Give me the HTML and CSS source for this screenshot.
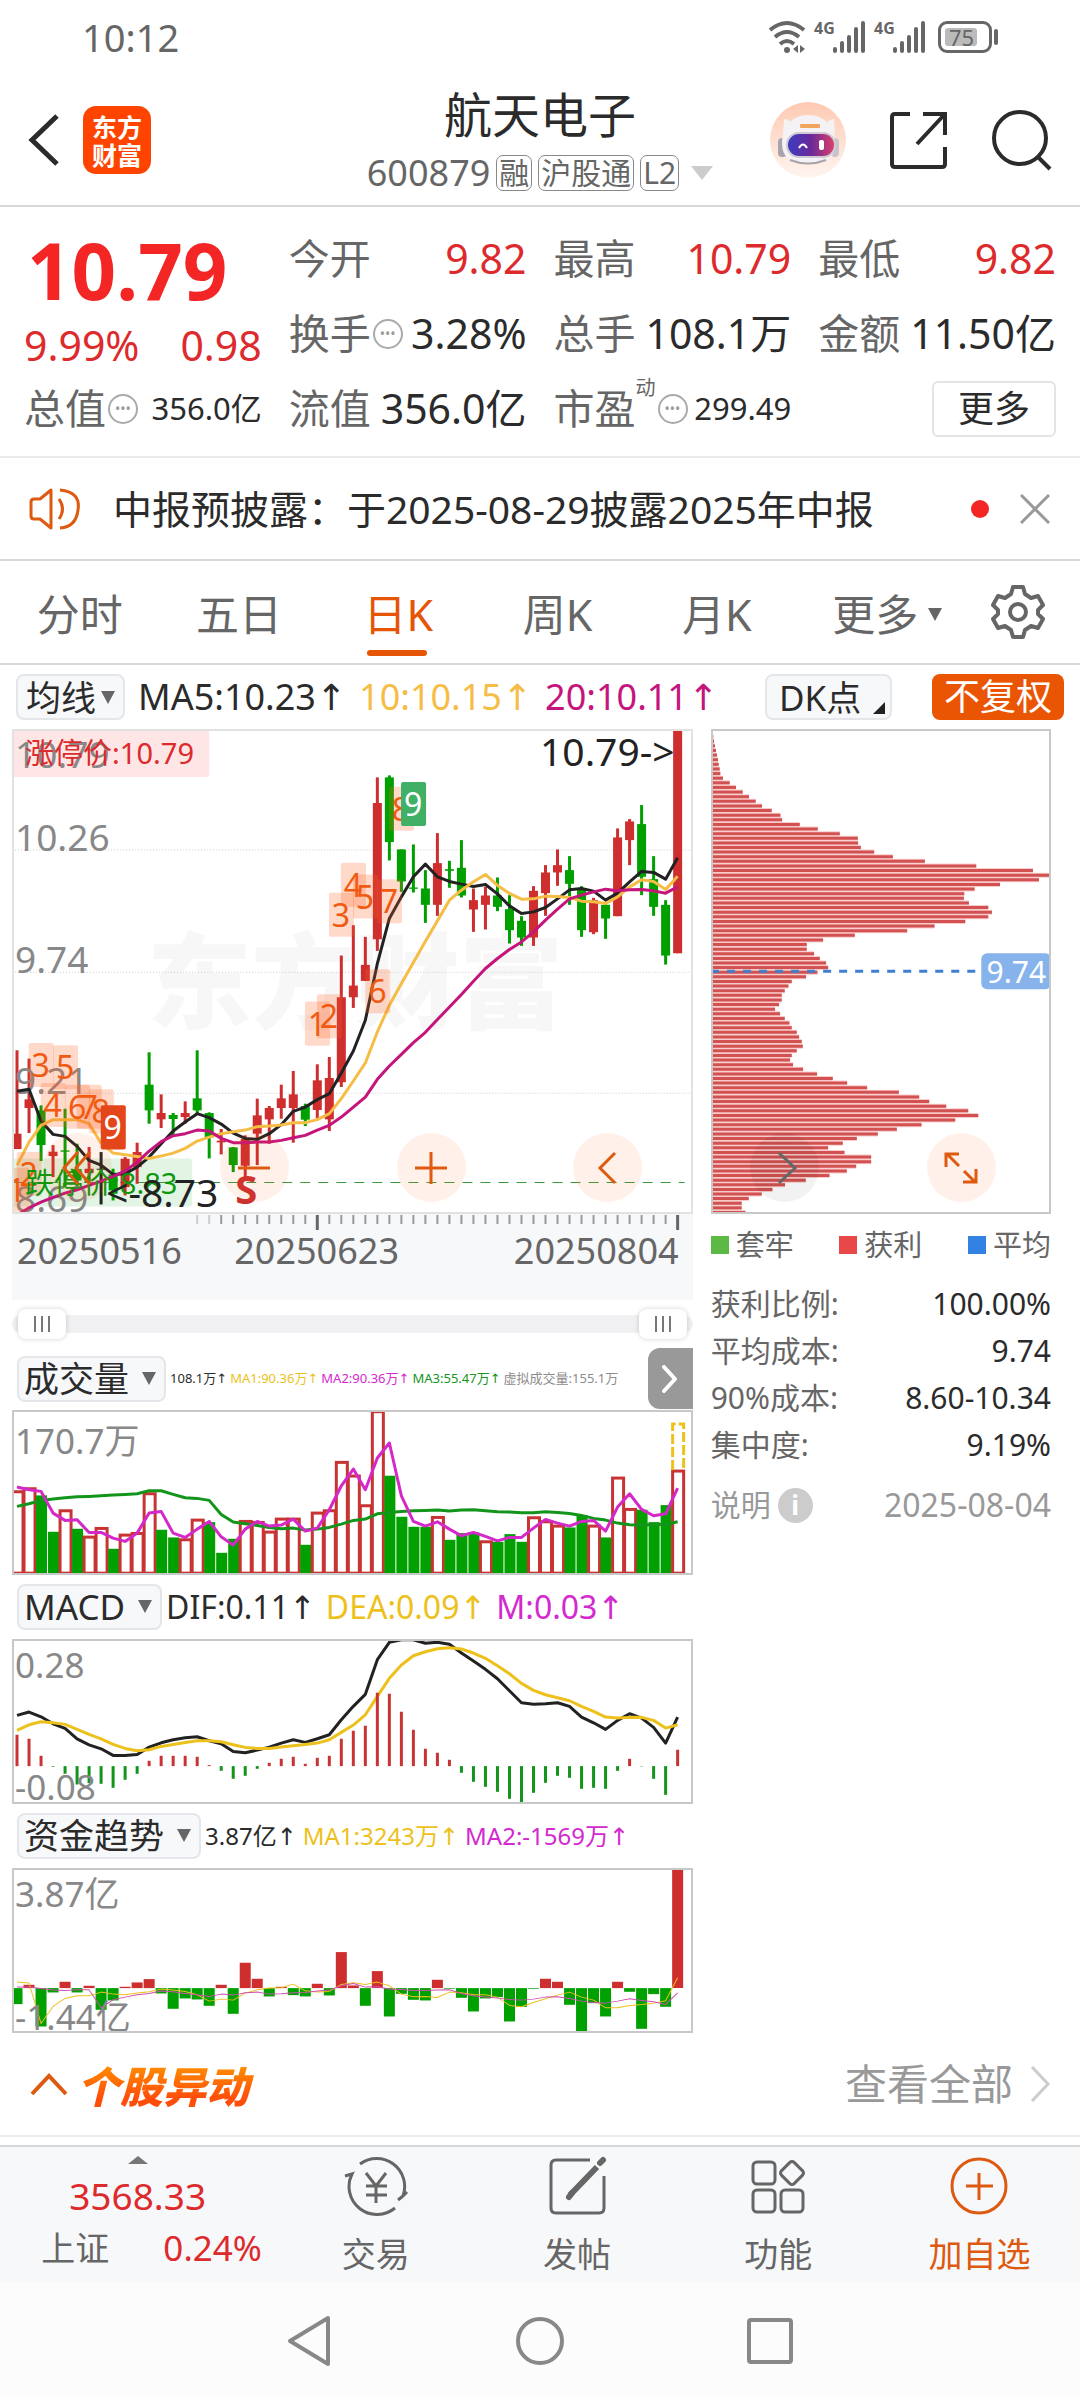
FILE: index.html
```html
<!DOCTYPE html>
<html lang="zh-CN">
<head>
<meta charset="utf-8">
<meta name="viewport" content="width=device-width, initial-scale=1">
<title>航天电子 600879</title>
<link rel="stylesheet" href="styles.css">
</head>
<body>
<div class="status">
  <span class="clock">10:12</span>
  <div class="status-icons">
    <svg class="wifi" viewBox="0 0 38 34" width="38" height="34"><g fill="none" stroke="#666" stroke-width="4"><path d="M2 10Q19-4 36 10"/><path d="M7 17Q19 7 31 17"/><path d="M12 24Q19 18 26 24"/></g><circle cx="19" cy="30" r="3" fill="#666"/><path d="M30 25v8l-5-4zM32 25l5 4-5 4z" fill="#666"/></svg>
    <span class="net">4G</span>
    <svg viewBox="0 0 34 34" width="34" height="34" stroke="#666" stroke-width="4" stroke-linecap="round"><path d="M3 29v2M10 23v8M17 17v14M24 9v22M31 3v28"/></svg>
    <span class="net">4G</span>
    <svg viewBox="0 0 34 34" width="34" height="34" stroke="#666" stroke-width="4" stroke-linecap="round"><path d="M3 29v2M10 23v8M17 17v14M24 9v22M31 3v28"/></svg>
    <span class="battery"><b>75</b></span>
  </div>
</div>

<header class="head">
  <div class="head-left">
    <button class="plain" aria-label="返回"><svg width="32" height="54" viewBox="0 0 32 54"><path d="M29 3L4 27l25 24" fill="none" stroke="#2b2b2b" stroke-width="5"/></svg></button>
    <a class="logo" href="#">东方<br>财富</a>
  </div>
  <div class="head-mid">
    <h1>航天电子</h1>
    <div class="sub"><span class="code">600879</span><span class="tag">融</span><span class="tag">沪股通</span><span class="tag">L2</span><svg class="drop" width="22" height="14" viewBox="0 0 22 14"><path d="M0 0h22L11 14z" fill="#ccc"/></svg></div>
  </div>
  <div class="head-right">
    <button class="plain" aria-label="智能助手"><svg width="76" height="76" viewBox="0 0 76 76"><defs><linearGradient id="halo" x1="0" y1="0" x2="0" y2="1"><stop offset="0" stop-color="#fdc9b2"/><stop offset="1" stop-color="#fff5f0"/></linearGradient><linearGradient id="visor" x1="0" y1="0" x2="1" y2="0"><stop offset="0" stop-color="#3b3cc0"/><stop offset=".5" stop-color="#6a2a9a"/><stop offset="1" stop-color="#e0406a"/></linearGradient></defs><circle cx="38" cy="38" r="38" fill="url(#halo)"/><path d="M14 17q6 0 8 6l-9 9zM64 17q-6 0-8 6l9 9z" fill="#f6f2f2"/><rect x="8" y="36" width="9" height="19" rx="4" fill="#a9a4ac"/><rect x="61" y="36" width="8" height="19" rx="4" fill="#c9c4cb"/><path d="M38 13C55 13 65 25 65 41S55 62 39 62 12 57 12 41 22 13 38 13z" fill="#f4f2f4"/><path d="M20 58q18 7 36 0" stroke="#a9a4ac" stroke-width="2" fill="none"/><rect x="30" y="22" width="20" height="4" rx="1" fill="#f2a55e"/><rect x="17" y="31" width="48" height="24" rx="12" fill="url(#visor)" stroke="#d0cad4" stroke-width="2"/><path d="M29 46q4-7 8 0" stroke="#fff" stroke-width="2" fill="none"/><rect x="49" y="38" width="5" height="10" rx="2" fill="#fff"/></svg></button>
    <button class="plain" aria-label="分享"><svg width="60" height="60" viewBox="0 0 60 60" fill="none" stroke="#2b2b2b" stroke-width="4"><path d="M21 4H6q-3 0-3 3v47q0 3 3 3h47q3 0 3-3V37"/><path d="M34 4h22v21M55 5L28 34"/></svg></button>
    <button class="plain" aria-label="搜索"><svg width="60" height="62" viewBox="0 0 60 62" fill="none" stroke="#2b2b2b" stroke-width="4"><circle cx="28" cy="29" r="26"/><path d="M46 48l12 12"/></svg></button>
  </div>
</header>

<section class="quote">
  <div class="price-cell"><strong>10.79</strong><div class="pair red"><span>9.99%</span><span>0.98</span></div></div>
  <div class="cell"><span>今开</span><b class="red">9.82</b></div>
  <div class="cell"><span>最高</span><b class="red">10.79</b></div>
  <div class="cell"><span>最低</span><b class="red">9.82</b></div>
  <div class="cell"><span>换手<i class="more-dot">•••</i></span><b>3.28%</b></div>
  <div class="cell"><span>总手</span><b>108.1万</b></div>
  <div class="cell"><span>金额</span><b>11.50亿</b></div>
  <div class="cell small"><span>总值<i class="more-dot">•••</i></span><b>356.0亿</b></div>
  <div class="cell"><span>流值</span><b>356.0亿</b></div>
  <div class="cell small"><span>市盈<sup>动</sup><i class="more-dot">•••</i></span><b>299.49</b></div>
  <div class="cell last"><button class="more-btn">更多</button></div>
</section>

<section class="notice">
  <svg width="52" height="44" viewBox="0 0 52 44" fill="none" stroke="#dd5a10" stroke-width="3" stroke-linejoin="round"><path d="M22 3v38L11 32H5q-3 0-3-3V15q0-3 3-3h6z"/><path d="M30 12q7 10 0 20M31 3q21 2 18 20-2 17-18 18"/></svg>
  <a href="#">中报预披露：于2025-08-29披露2025年中报</a>
  <i class="dot"></i>
  <button class="plain" aria-label="关闭"><svg width="30" height="30" viewBox="0 0 30 30" stroke="#999" stroke-width="3"><path d="M1 1l28 28M29 1L1 29"/></svg></button>
</section>

<nav class="tabs">
  <button>分时</button><button>五日</button><button class="on">日K</button><button>周K</button><button>月K</button>
  <button>更多<svg width="14" height="13" viewBox="0 0 14 13"><path d="M0 0h14L7 13z" fill="#666"/></svg></button>
  <button class="gear" aria-label="设置"><svg width="54" height="54" viewBox="0 0 54 54" fill="none" stroke="#666" stroke-width="4" stroke-linejoin="round"><path d="M22 2h10l2 7 6 4 7-2 5 9-5 5v4l5 5-5 9-7-2-6 4-2 7H22l-2-7-6-4-7 2-5-9 5-5v-4l-5-5 5-9 7 2 6-4z"/><circle cx="27" cy="27" r="8"/></svg></button>
</nav>

<div class="ma-row">
  <button class="chip tight">均线<svg width="14" height="13" viewBox="0 0 14 13"><path d="M0 0h14L7 13z" fill="#666"/></svg></button>
  <span>MA5:10.23↑</span><span class="amber">10:10.15↑</span><span class="pink">20:10.11↑</span>
  <button class="chip dk">DK点<svg width="12" height="12" viewBox="0 0 12 12"><path d="M12 0v12H0z" fill="#222"/></svg></button>
  <button class="fill-btn">不复权</button>
</div>

<main class="board">
  <div class="left">
    <svg class="chart frame" viewBox="0 0 680 485" id="price">
      <g class="mark"><text x="135" y="292">东方财富</text></g>
      <g class="grid"><path d="M0 121H680M0 243H680M0 364H680"/></g>
      <rect width="197" height="48" rx="3" class="up-box"/>
      <rect y="429" width="180" height="48" rx="3" class="down-box"/>
      <path d="M0 1H680" class="limit-up"/><path d="M0 453H672" class="limit-down"/>
      <g id="candles"></g>
      <g class="axis-text"><text x="3" y="39">10.79</text><text x="3" y="122">10.26</text><text x="3" y="244">9.74</text><text x="3" y="365">9.21</text><text x="3" y="483">8.69</text></g>
      <g id="averages"></g>
      <g id="signals"></g>
      <text x="13" y="35" class="limit-text red-fill">涨停价:10.79</text>
      <text x="13" y="465" class="limit-text green-fill">跌停价:8.83</text>
      <text x="94" y="478" class="peak">&lt;-8.73</text>
      <text x="662" y="37" class="peak end">10.79-&gt;</text>
      <text x="223" y="475" class="sell">S</text>
    </svg>
    <svg class="chart axis" viewBox="0 0 680 85"><g id="ticks"></g><text x="5" y="50">20250516</text><text x="222" y="50">20250623</text><text x="666" y="50" class="end">20250804</text></svg>
    <div class="range"><input type="range" aria-label="开始日期" value="0"><input type="range" aria-label="结束日期" value="100"></div>
    <div class="ind-row"><button class="chip">成交量<svg width="14" height="13" viewBox="0 0 14 13"><path d="M0 0h14L7 13z" fill="#666"/></svg></button>
      <div class="vals tiny"><span>108.1万↑</span><span class="gold">MA1:90.36万↑</span><span class="violet">MA2:90.36万↑</span><span class="green">MA3:55.47万↑</span><span class="gray">虚拟成交量:155.1万</span></div>
      <button class="next" aria-label="下一个"><svg width="16" height="28" viewBox="0 0 16 28"><path d="M2 2l11 12L2 26" fill="none" stroke="#fff" stroke-width="4" stroke-linecap="round" stroke-linejoin="round"/></svg></button></div>
    <svg class="chart frame dark" viewBox="0 0 680 165"><text x="3" y="44" class="label">170.7万</text><g id="volume"></g></svg>
    <div class="ind-row tall"><button class="chip">MACD<svg width="14" height="13" viewBox="0 0 14 13"><path d="M0 0h14L7 13z" fill="#666"/></svg></button>
      <div class="vals wide"><span>DIF:0.11↑</span><span class="gold">DEA:0.09↑</span><span class="violet">M:0.03↑</span></div></div>
    <svg class="chart frame dark" viewBox="0 0 680 165"><g id="macd"></g><text x="3" y="39" class="label">0.28</text><text x="3" y="161" class="label">-0.08</text></svg>
    <div class="ind-row tall"><button class="chip">资金趋势<svg width="14" height="13" viewBox="0 0 14 13"><path d="M0 0h14L7 13z" fill="#666"/></svg></button>
      <div class="vals mid"><span>3.87亿↑</span><span class="gold">MA1:3243万↑</span><span class="violet">MA2:-1569万↑</span></div></div>
    <svg class="chart frame dark" viewBox="0 0 680 165"><g id="funds"></g><text x="3" y="39" class="label">3.87亿</text><text x="3" y="162" class="label">-1.44亿</text></svg>
  </div>

  <aside class="right">
    <svg class="chart frame dark" viewBox="0 0 340 485"><g id="chips"></g><path d="M0 242H265" class="avg-line"/><rect x="270" y="224" width="70" height="36" rx="6" fill="#86b3ec"/><text x="305" y="254" class="avg-text">9.74</text></svg>
    <ul class="legend"><li class="k1">套牢</li><li class="k2">获利</li><li class="k3">平均</li></ul>
    <dl><div><dt>获利比例:</dt><dd>100.00%</dd></div><div><dt>平均成本:</dt><dd>9.74</dd></div><div><dt>90%成本:</dt><dd>8.60-10.34</dd></div><div><dt>集中度:</dt><dd>9.19%</dd></div></dl>
    <div class="explain"><span>说明<i>i</i></span><time>2025-08-04</time></div>
  </aside>

  <div class="tools">
    <button aria-label="快退"><svg viewBox="0 0 34 34"><path d="M17 1L3 17l14 16M29 1L15 17l14 16"/></svg></button>
    <button aria-label="缩小"><svg viewBox="0 0 34 34"><path d="M1 17h32"/></svg></button>
    <button aria-label="放大"><svg viewBox="0 0 34 34"><path d="M1 17h32M17 1v32"/></svg></button>
    <button aria-label="左移"><svg viewBox="0 0 34 34"><path d="M24 2L9 17l15 15"/></svg></button>
    <button aria-label="右移" class="off"><svg viewBox="0 0 34 34"><path d="M11 2l16 15-16 15"/></svg></button>
    <button aria-label="全屏"><svg viewBox="0 0 34 34"><path d="M2 16V3h13M3 3l12 12M32 18v13H19M31 31L20 20"/></svg></button>
  </div>
</main>

<section class="moves">
  <svg width="38" height="24" viewBox="0 0 38 24"><path d="M2 22L19 4l17 18" fill="none" stroke="#dd5a10" stroke-width="4"/></svg>
  <h2>个股异动</h2>
  <a href="#">查看全部<svg width="22" height="36" viewBox="0 0 22 36"><path d="M3 1l16 17L3 35" fill="none" stroke="#ccc" stroke-width="3"/></svg></a>
</section>

<nav class="bottom">
  <a href="#" class="index"><svg width="20" height="8" viewBox="0 0 20 8"><path d="M0 8h20L10 0z" fill="#777"/></svg><b>3568.33</b><span><em>上证</em><i>0.24%</i></span></a>
  <a href="#"><svg width="66" height="60" viewBox="0 0 66 60" fill="none" stroke="#666" stroke-width="3"><path d="M17 8a28 28 0 0 1 43 32l4-4M60 40l-5 4M52 52A28 28 0 0 1 9 18L2 20"/><path d="M23 17l10 13 10-13M23 30h21M23 39h21M33 30v17"/></svg>交易</a>
  <a href="#"><svg width="60" height="60" viewBox="0 0 60 60" fill="none" stroke="#666" stroke-width="3"><path d="M43 4H9q-5 0-5 5v43q0 5 5 5h43q5 0 5-5V20"/><path d="M50 11L23 39" stroke-width="6"/><path d="M25 37l-3 4M53 7l3-3" stroke-width="6" stroke-linecap="round"/></svg>发帖</a>
  <a href="#"><svg width="60" height="60" viewBox="0 0 60 60" fill="none" stroke="#666" stroke-width="3"><rect x="5" y="6" width="22" height="22" rx="4"/><rect x="5" y="34" width="22" height="22" rx="4"/><rect x="33" y="34" width="22" height="22" rx="4"/><rect x="35" y="8" width="18" height="18" rx="3" transform="rotate(45 44 17)"/></svg>功能</a>
  <a href="#" class="hot"><svg width="60" height="60" viewBox="0 0 60 60" fill="none" stroke="#dd5a10" stroke-width="3"><circle cx="30" cy="30" r="27"/><path d="M17 30h27M30 17v27"/></svg>加自选</a>
</nav>

<div class="system">
  <button class="plain" aria-label="返回键"><svg width="50" height="54" viewBox="0 0 50 54"><path d="M43 4v46L5 27z" fill="none" stroke="#888" stroke-width="4" stroke-linejoin="round"/></svg></button>
  <button class="plain" aria-label="主屏幕"><svg width="50" height="50" viewBox="0 0 50 50"><circle cx="25" cy="25" r="22" fill="none" stroke="#888" stroke-width="4"/></svg></button>
  <button class="plain" aria-label="最近任务"><svg width="50" height="50" viewBox="0 0 50 50"><rect x="4" y="4" width="42" height="42" rx="2" fill="none" stroke="#888" stroke-width="4"/></svg></button>
</div>
<script src="charts.js"></script>
</body>
</html>
```

FILE: styles.css
```css
* { box-sizing: border-box; }
body {
  margin: 0;
  background: #fff;
  color: #2b2b2b;
  font-family: "Noto Sans", "DejaVu Sans", "Noto Sans CJK SC", sans-serif;
  line-height: 1;
}
button { font: inherit; color: inherit; padding: 0; border: 0; background: none; }
.plain, .plain svg { display: block; }
a { color: inherit; text-decoration: none; }
b, em, i { font-weight: 400; font-style: normal; }
svg { flex: none; }

.red { color: #dd2a2c; }
.amber { color: #f5bd45; }
.pink { color: #c5147c; }
.gold { color: #edc11c; }
.violet { color: #d428d0; }
.green { color: #12951a; }
.gray { color: #8b8b8b; }

.status {
  display: flex;
  align-items: center;
  justify-content: space-between;
  height: 74px;
  padding: 0 82px;
}
.clock { font-size: 38px; color: #666; }
.status-icons { display: flex; align-items: center; gap: 8px; color: #666; }
.net { font-size: 16px; font-weight: 700; width: 20px; align-self: flex-start; margin-right: -10px; }
.battery {
  position: relative;
  display: flex;
  width: 54px;
  height: 32px;
  margin: 0 6px 0 4px;
  padding: 4px;
  border: 3px solid #666;
  border-radius: 9px;
}
.battery b {
  width: 32px;
  background: #bbb;
  border-radius: 3px;
  font-size: 22px;
  line-height: 18px;
  padding-left: 4px;
}
.battery::after {
  content: "";
  position: absolute;
  right: -9px;
  top: 5px;
  width: 4px;
  height: 16px;
  border-radius: 2px;
  background: #666;
}

.head {
  display: grid;
  grid-template-columns: 1fr auto 1fr;
  align-items: center;
  height: 133px;
  padding: 0 28px;
  border-bottom: 2px solid #d8d8d8;
}
.head-left, .head-right { display: flex; align-items: center; }
.head-left { gap: 23px; }
.head-right { justify-content: flex-end; gap: 43px; }
.logo {
  width: 68px;
  height: 68px;
  padding-top: 6px;
  border-radius: 13px;
  background: #ff4400;
  color: #fff;
  font: 700 25px/28px "Noto Sans CJK SC", sans-serif;
  text-align: center;
}
.head-mid { text-align: center; }
h1 { margin: 0; font-size: 48px; font-weight: 400; line-height: 66px; }
.sub { display: flex; align-items: center; justify-content: center; gap: 6px; height: 50px; color: #666; }
.code { font-size: 36px; }
.tag { font-size: 30px; line-height: 34px; padding: 0 2px; border: 1px solid #888; border-radius: 7px; }
.drop { margin-left: 6px; }

.quote {
  display: grid;
  grid-template-columns: repeat(4, 1fr);
  grid-auto-rows: 75px;
  column-gap: 27px;
  padding: 14px 24px 10px;
  border-bottom: 2px solid #ebebeb;
}
.price-cell { grid-row: span 2; }
.price-cell strong { display: block; font-size: 78px; line-height: 98px; padding-left: 3px; margin-bottom: 2px; color: #f42525; }
.pair { display: flex; justify-content: space-between; font-size: 41px; line-height: 48px; }
.cell { display: flex; align-items: center; justify-content: space-between; font-size: 41px; white-space: nowrap; }
.cell span { display: flex; align-items: center; color: #666; }
.cell.small b { font-size: 31px; }
.cell sup { font-size: 20px; align-self: flex-start; margin-top: -10px; }
.more-dot {
  width: 30px;
  height: 30px;
  margin-left: 2px;
  border: 2px solid #aaa;
  border-radius: 50%;
  font-size: 14px;
  line-height: 26px;
  text-align: center;
  color: #999;
}
.cell.last { justify-content: flex-end; }
.more-btn { width: 124px; height: 56px; border: 2px solid #e4e4e4; border-radius: 6px; font-size: 36px; }

.notice {
  display: flex;
  align-items: center;
  height: 103px;
  padding: 0 30px 0 29px;
  border-bottom: 2px solid #d8d8d8;
}
.notice a { flex: 1; margin-left: 32px; font-size: 39px; white-space: nowrap; }
.dot { width: 18px; height: 18px; margin-right: 31px; border-radius: 50%; background: #f42525; }

.tabs {
  display: grid;
  grid-template-columns: repeat(5, 159fr) 181fr 80fr;
  justify-items: center;
  height: 104px;
  padding-right: 22px;
  border-bottom: 2px solid #d8d8d8;
  font-size: 43px;
  color: #666;
}
.tabs button { position: relative; display: flex; align-items: center; gap: 10px; height: 100%; padding-top: 4px; }
.tabs .gear { padding: 0; }
.tabs .on { color: #e65505; }
.tabs .on::after {
  content: "";
  position: absolute;
  left: 4px;
  bottom: 7px;
  width: 60px;
  height: 6px;
  border-radius: 3px;
  background: #e65505;
}

.ma-row { display: flex; align-items: center; height: 64px; padding: 0 16px; font-size: 36px; white-space: nowrap; }
.ma-row > span { margin-left: 13px; }
.chip {
  display: flex;
  align-items: center;
  justify-content: space-between;
  gap: 13px;
  height: 46px;
  padding: 0 8px 0 5px;
  border: 2px solid #e4e6ea;
  border-radius: 8px;
  background: #f7f8fa;
  font-size: 35px;
  white-space: nowrap;
}
.chip.tight { gap: 5px; padding-left: 8px; }
.chip.dk { width: 127px; gap: 0; margin-left: auto; padding: 0 5px 0 12px; }
.chip.dk svg { align-self: flex-end; margin-bottom: 4px; }
.fill-btn { width: 132px; height: 46px; margin-left: 40px; border-radius: 8px; background: #ea5504; color: #fff; font-size: 36px; }

.board {
  position: relative;
  display: grid;
  grid-template-columns: 2fr 1fr;
  column-gap: 18px;
  padding: 0 29px 0 12px;
}
.chart { display: block; width: 100%; height: auto; }
.frame { outline: 2px solid #e2e2e2; outline-offset: -2px; }
.frame.dark { outline-color: #c8c8c8; }
.end { text-anchor: end; }
.mark { font: 900 104px "Noto Sans CJK SC", sans-serif; fill: #f7f7f7; }
.grid { stroke: #ccc; stroke-dasharray: 1 2; }
.up-box { fill: #fee6e6; }
.down-box { fill: #e2f4e4; }
.limit-up { stroke: #d48a78; stroke-width: 1; stroke-dasharray: 10 5; }
.limit-down { stroke: #3b9a3b; stroke-width: 1; stroke-dasharray: 10 8; }
.axis-text { font-size: 37px; fill: #888; }
.limit-text { font-size: 29px; }
.red-fill { fill: #dd2a2c; }
.green-fill { fill: #0c980c; }
.peak { font-size: 39px; fill: #222; }
.sell { font-size: 40px; font-weight: 700; fill: #cc2f2f; }
.signal { font-size: 32px; text-anchor: middle; fill: #f05a10; }
.signal.lit { fill: #fff; }
.label { font-size: 35px; fill: #888; }
.axis { background: #f7f8fa; font-size: 36px; fill: #666; }
.avg-line { stroke: #3f7fcf; stroke-width: 3; stroke-dasharray: 8 8; }
.avg-text { font-size: 30px; fill: #fff; text-anchor: middle; }

.range { position: relative; height: 48px; }
.range::before { content: ""; position: absolute; inset: 15px 0; border-radius: 9px; background: #f0f0f2; }
.range input {
  position: absolute;
  inset: 9px 6px auto;
  width: calc(100% - 12px);
  height: 30px;
  margin: 0;
  appearance: none;
  background: none;
  pointer-events: none;
}
.range input::-webkit-slider-thumb {
  appearance: none;
  width: 48px;
  height: 30px;
  border-radius: 8px;
  background:
    linear-gradient(#777, #777) 16px 7px / 2px 16px no-repeat,
    linear-gradient(#777, #777) 23px 7px / 2px 16px no-repeat,
    linear-gradient(#777, #777) 30px 7px / 2px 16px no-repeat,
    #fff;
  box-shadow: 0 0 5px rgba(0, 0, 0, .18);
  pointer-events: auto;
}

.ind-row { display: flex; align-items: center; height: 62px; padding-left: 5px; }
.ind-row.tall { height: 64px; }
.vals { display: flex; margin-left: 4px; white-space: nowrap; }
.tiny { gap: 3px; font-size: 13px; }
.mid { gap: 6px; font-size: 24px; }
.wide { gap: 10px; font-size: 32px; }
.next {
  display: grid;
  place-items: center;
  width: 45px;
  height: 61px;
  margin-left: auto;
  border-radius: 12px 0 0 12px;
  background: #999;
}

.legend { display: flex; justify-content: space-between; margin: 15px 0 19px; padding: 0; list-style: none; font-size: 29px; line-height: 32px; color: #666; }
.legend li { display: flex; align-items: center; gap: 7px; }
.legend li::before { content: ""; width: 18px; height: 18px; background: #5cb944; }
.legend .k2::before { background: #e84848; }
.legend .k3::before { background: #3381e3; }
dl { margin: 0; font-size: 30px; line-height: 47px; }
dl div, .explain { display: flex; justify-content: space-between; }
dt { color: #666; }
dd { margin: 0; }
.explain { margin-top: 19px; font-size: 30px; line-height: 36px; color: #999; }
.explain time { font-size: 32px; }
.explain span { display: flex; align-items: center; gap: 7px; }
.explain i { width: 35px; height: 35px; border-radius: 50%; background: #ccc; color: #fff; font-size: 26px; font-weight: 700; line-height: 34px; text-align: center; }

.tools {
  position: absolute;
  top: 404px;
  left: 43px;
  right: 84px;
  display: flex;
  justify-content: space-between;
}
.tools button { display: grid; place-items: center; width: 69px; height: 69px; border-radius: 50%; background: rgba(255, 96, 16, .09); }
.tools svg { width: 34px; height: 34px; fill: none; stroke: #dd5a10; stroke-width: 3; }
.tools .off { background: rgba(0, 0, 0, .05); }
.tools .off svg { stroke: #666; }

.moves { display: flex; align-items: center; height: 104px; padding: 0 29px 0 30px; border-bottom: 2px solid #ebebeb; }
h2 {
  margin: 0 0 0 9px;
  padding-right: 8px;
  font: italic 900 43px/56px "Noto Sans CJK SC", sans-serif;
  color: transparent;
  background: linear-gradient(#ff8a00 20%, #ff4e0a 75%);
  background-clip: text;
}
.moves a { display: flex; align-items: center; gap: 16px; margin-left: auto; font-size: 42px; color: #999; }

.bottom {
  display: grid;
  grid-template-columns: 275fr repeat(4, 201fr);
  height: 137px;
  margin-top: 8px;
  border-top: 2px solid #d8d8d8;
  background: #f7f8fa;
  color: #666;
  font-size: 34px;
}
.bottom a { display: flex; flex-direction: column; align-items: center; gap: 18px; padding-top: 9px; line-height: 40px; }
.bottom .index { gap: 12px; padding-top: 9px; }
.index b { font-size: 37px; color: #dd2a2c; }
.index span { display: flex; gap: 54px; padding-left: 28px; }
.index i { color: #dd2a2c; font-size: 35px; }
.bottom .hot { color: #dd5a10; }

.system {
  display: grid;
  grid-template-columns: repeat(3, 1fr);
  place-items: center;
  height: 117px;
  padding: 0 18%;
  background: #fcfcfc;
}
```

FILE: charts.js
```js
// Samples are kept in thirds of a pixel, measured down the panel; STEP is the distance between trading days.
const STEP = 12;
const RED = '#cf2e2e', GREEN = '#00a000';
const cx = i => 5 + i * STEP;
const put = (id, html) => { document.getElementById(id).innerHTML = html; };
const line = (vals, top, color, width) =>
  `<polyline fill="none" stroke="${color}" stroke-width="${width}" stroke-linejoin="round" points="${vals.map((v, i) => `${cx(i)},${((v - top) / 3).toFixed(1)}`).join(' ')}"/>`;

// direction, high, body top, body bottom, low
const candles = [
['R',1020,1270,1316,1316],['R',1045,1167,1193,1268],['G',1185,1200,1304,1352],['R',1304,1324,1337,1400],['G',1195,1320,1324,1430],
['G',1300,1376,1410,1440],['R',1310,1375,1388,1420],['K',1325,1375,1378,1482],['G',1375,1392,1440,1470],['R',1340,1345,1430,1455],
['R',1297,1325,1370,1420],['G',1026,1123,1200,1240],['R',1152,1208,1227,1253],['G',1208,1214,1226,1280],['R',1173,1208,1220,1240],
['G',1020,1164,1200,1212],['G',1206,1208,1281,1344],['R',1256,1291,1296,1332],['G',1310,1311,1364,1385],['R',1275,1286,1366,1400],
['R',1165,1215,1270,1364],['R',1187,1193,1227,1300],['R',1123,1164,1193,1225],['R',1082,1152,1193,1297],['G',1180,1187,1228,1247],
['R',1062,1110,1199,1224],['R',1040,1103,1227,1262],['R',736,861,1116,1130],['R',645,826,861,893],['R',680,764,812,812],
['R',202,279,687,722],['G',196,202,396,451],['G',418,418,514,545],['G',403,532,536,547],['G',480,535,584,638],
['R',369,459,584,617],['G',452,477,482,533],['G',390,473,556,562],['R',535,570,598,665],['R',530,556,584,658],
['G',502,556,590,603],['G',555,597,660,700],['G',618,632,682,707],['R',528,542,682,707],['R',465,487,549,617],
['R',418,465,487,527],['G',438,480,521,584],['G',528,534,660,680],['R',563,570,666,672],['G',580,584,625,686],
['R',355,382,618,618],['R',327,334,390,465],['G',285,342,500,555],['G',438,507,590,617],['G',570,584,736,763],['R',60,60,729,729]];
put('candles', candles.map(([d, h, a, b, l], i) => {
  const c = d === 'R' ? RED : d === 'G' ? GREEN : '#222', y = v => (v - 57) / 3, x = cx(i);
  return `<path d="M${x} ${y(h)}V${y(l)}" stroke="${c}" stroke-width="3"/><path d="M${x} ${y(a)}V${y(b)}" stroke="${c}" stroke-width="9"/>`;
}).join(''));

const ma5 = [1143,1137,1232,1272,1278,1308,1350,1364,1392,1390,1370,1340,1300,1262,1235,1210,1222,1241,1268,1284,1287,1270,1243,1203,1190,1168,1150,1088,1022,930,760,625,560,500,462,500,514,522,529,523,551,587,610,605,592,566,539,535,543,570,549,515,484,487,507,443];
const ma10 = [1365,1295,1245,1228,1228,1228,1240,1298,1328,1333,1338,1344,1337,1328,1314,1292,1280,1270,1264,1259,1249,1247,1244,1237,1237,1228,1210,1165,1112,1058,965,885,820,757,693,632,570,540,515,493,526,550,567,566,558,559,562,573,575,580,560,530,509,514,538,498];
const ma20 = [1514,1492,1475,1461,1448,1438,1425,1412,1398,1382,1355,1322,1294,1276,1270,1259,1262,1284,1297,1297,1295,1295,1290,1282,1275,1259,1245,1220,1190,1160,1107,1067,1032,997,966,928,890,853,813,775,745,718,695,665,630,597,566,555,545,537,542,539,538,542,549,530];
put('averages', line(ma5, 57, '#222', 3) + line(ma10, 57, '#f5bd45', 3) + line(ma20, 57, '#c5147c', 3));

const signals = [[1,14,1372],[2,50,1325],[3,86,998],[5,159,1005],[4,122,1118],[6,195,1123],[7,230,1123],[8,266,1137],[9,302,1185,'#e3461a'],
[1,914,874],[2,950,852],[3,986,548],[4,1022,458],[5,1058,493],[7,1130,507],[6,1095,777],[8,1166,230],[9,1202,216,'#3fb065']];
put('signals', signals.map(([n, x, y, fill]) => {
  const px = x / 3 - 12, py = (y - 57) / 3;
  return `<rect x="${px}" y="${py}" width="25" height="44" rx="2" fill="${fill || 'rgba(255,96,32,.24)'}"/><text x="${px + 12}" y="${py + 34}" class="signal${fill ? ' lit' : ''}">${n}</text>`;
}).join(''));

let ticks = '';
for (let i = 15; i < 56; i++) {
  const major = i === 25 || i === 55;
  ticks += `<path d="M${cx(i)} 1V${major ? 16 : 10}" stroke="${i < 17 ? '#ccc' : major ? '#666' : '#999'}" stroke-width="${major ? 3 : 2}"/>`;
}
put('ticks', ticks);

// volume: R is a rising day, drawn hollow; G is a falling day
const vol = 'R273 R264 G287 G396 R330 G387 R409 R383 G447 R403 R398 R279 G390 G413 R417 R358 G367 G459 G417 R362 R365 R394 R355 R355 G435 R337 R330 R185 R226 R315 R33 G228 G351 G381 G381 R350 G420 G400 G398 R423 G426 G403 G426 R351 R363 R376 G383 G346 R376 G413 R232 R326 G330 G367 G316 R211'.split(' ');
const volMa2 = [262,270,275,340,362,360,398,398,415,425,400,340,335,400,413,388,365,411,436,388,365,379,376,358,394,385,330,258,208,270,175,130,288,365,379,366,388,408,398,410,423,413,413,385,359,370,379,365,362,394,322,282,329,348,342,265];
const volMa3 = [320,312,302,298,294,291,290,288,286,284,282,273,273,284,294,296,302,344,367,372,377,383,387,385,391,388,383,373,362,358,342,338,335,333,332,331,334,331,330,333,336,337,339,339,336,338,341,347,356,361,370,375,376,374,374,366];
put('volume', vol.map((s, i) => {
  const y = (+s.slice(1) - 31) / 3;
  return s[0] === 'R'
    ? `<rect x="${cx(i) - 5}" y="${y + 1}" width="11" height="${163 - y - 1}" fill="#fff" stroke="#c83434" stroke-width="3"/>`
    : `<rect x="${cx(i) - 5}" y="${y}" width="11" height="${164 - y}" fill="${GREEN}"/>`;
}).join('') + `<path d="M660 60V14h11v46" fill="none" stroke="#edc11c" stroke-width="3" stroke-dasharray="10 3"/>`
  + line(volMa3, 31, '#12951a', 3) + line(volMa2, 31, '#d428c8', 3));

const dif = [407,397,411,432,446,477,495,507,527,527,524,502,489,480,474,471,483,492,515,519,511,502,490,480,488,477,465,420,380,344,240,188,180,180,191,188,194,220,244,269,297,333,369,374,372,369,380,412,429,449,422,402,415,443,490,412];
const dea = [452,435,426,429,434,449,464,477,494,506,513,510,500,494,488,483,483,486,495,503,506,506,502,498,494,490,480,458,436,405,350,296,256,228,216,207,204,208,220,236,258,282,311,332,345,354,363,380,395,412,415,413,413,422,445,435];
const hist = [465,477,528,561,582,614,610,612,624,600,582,543,528,528,528,531,556,573,597,588,567,549,537,531,552,534,528,477,453,438,339,342,396,450,507,519,540,579,606,621,636,657,672,639,609,588,594,627,624,627,573,537,560,597,645,510];
put('macd', line(dif, 178, '#222', 3) + line(dea, 178, '#edc11c', 3)
  + hist.map((v, i) => `<path d="M${cx(i)} 127V${(v - 178) / 3}" stroke="${v < 558 ? '#c83434' : '#12951a'}" stroke-width="3"/>`).join(''));

const flow = [583,525,650,548,516,548,528,600,572,531,518,508,551,597,566,569,588,525,612,459,507,560,531,556,560,522,557,427,527,588,484,620,552,570,572,510,537,564,605,566,562,635,591,537,507,516,585,669,580,620,516,546,657,553,591,175];
const flowMa1 = [517,520,641,590,566,558,558,547,553,555,550,546,538,541,545,555,574,568,571,550,540,535,534,523,543,547,545,524,519,524,517,528,553,561,560,563,547,549,555,555,562,587,591,578,567,556,547,562,571,594,594,587,584,580,573,504];
const flowMa2 = [532,532,536,541,542,540,540,594,570,562,555,551,544,546,551,555,560,553,556,549,547,553,552,549,548,544,541,528,521,532,531,538,539,542,542,541,540,551,558,562,565,569,571,568,562,561,566,574,578,580,574,567,572,576,584,549];
put('funds', flow.map((v, i) => `<path d="M${cx(i)} 120V${(v - 175) / 3}" stroke="${v < 534 ? RED : GREEN}" stroke-width="11"/>`).join('')
  + line(flowMa1, 175, '#edc11c', 1) + line(flowMa2, 175, '#d050b0', 1));

// share of holders by cost, top price first
const chips = [66,67,69,72,75,78,81,83,86,88,96,116,135,155,174,194,213,242,268,273,326,380,446,500,501,509,549,605,701,855,1025,1080,1043,926,850,819,818,833,891,902,891,822,730,648,491,396,347,347,369,386,405,411,379,345,302,292,281,272,272,264,252,267,281,295,302,317,324,332,335,317,302,297,306,336,378,425,468,528,623,684,714,765,831,861,792,691,617,560,497,455,411,460,540,540,495,467,415,344,282,244,212,173,152,152,163];
put('chips', chips.map((v, i) => {
  const y = 3 + i * 480 / 104, w = (v - 60) / 3;
  return `<path d="M0 ${y}H${w}" stroke="#f9caca" stroke-width="5"/><path d="M0 ${y}H${w}" stroke="#d25252" stroke-width="3"/>`;
}).join(''));
```
